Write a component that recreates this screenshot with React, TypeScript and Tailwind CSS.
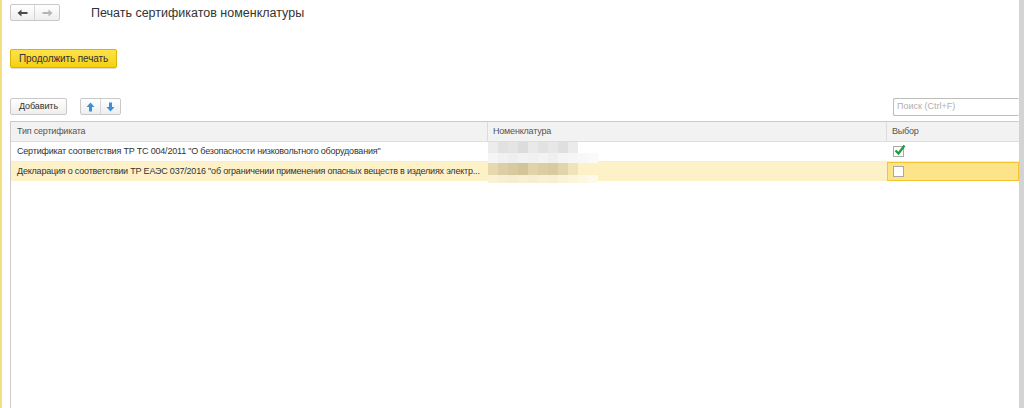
import React from "react";

const FONT = "font-['Liberation_Sans',Arial,sans-serif]";

// pixelated (blurred) name cells: [row of block colours]
const MOSAIC: { top: number; h: number; colors: string[] }[] = [
  { top: 0, h: 11, colors: ["#ececec", "#e1e1e1", "#e4e4e4", "#dcdcdc", "#e9e9e9", "#e2e2e2", "#e7e7e7", "#dfdfdf", "#ebebeb"] },
  { top: 11, h: 10, colors: ["#f5f5f3", "#f1f1ef", "#eeeeec", "#f2f2f0", "#f0f0ee", "#f3f3f1", "#efefed", "#f4f4f2", "#f6f6f4", "#f8f8f6", "#fafaf8"] },
  { top: 21, h: 12, colors: ["#e6d9b0", "#dccfa5", "#d8ca9e", "#d4c598", "#e0d3a8", "#dccea2", "#d9cb9f", "#e2d5ab", "#efe3bc"] },
  { top: 33, h: 8, colors: ["#fbf2d6", "#f8efd2", "#f6edd0", "#f9f0d4", "#f7eed2", "#faf1d5", "#f8efd3", "#fbf3d8", "#fcf5dc", "#fdf7e2", "#fef9e8"] },
];

function NavButtons() {
  return (
    <div className="flex h-[17px] rounded-[2px] border border-[#c9c9c9] bg-gradient-to-b from-white to-[#eeeeee]">
      <div className="flex w-[24px] items-center justify-center border-r border-[#d6d6d6]">
        <svg width="11" height="8" viewBox="0 0 11 8">
          <path d="M0.5 4 L4.5 0.5 L4.5 3 L10.5 3 L10.5 5 L4.5 5 L4.5 7.5 Z" fill="#4a4a4a" />
        </svg>
      </div>
      <div className="flex w-[24px] items-center justify-center">
        <svg width="11" height="8" viewBox="0 0 11 8">
          <path d="M10.5 4 L6.5 0.5 L6.5 3 L0.5 3 L0.5 5 L6.5 5 L6.5 7.5 Z" fill="#b5b5b5" />
        </svg>
      </div>
    </div>
  );
}

function Arrow({ up }: { up?: boolean }) {
  return (
    <svg width="9" height="10" viewBox="0 0 9 10">
      {up ? (
        <path d="M4.5 0.5 L8.5 5 L6 5 L6 9.5 L3 9.5 L3 5 L0.5 5 Z" fill="#3d8fd8" />
      ) : (
        <path d="M4.5 9.5 L8.5 5 L6 5 L6 0.5 L3 0.5 L3 5 L0.5 5 Z" fill="#3d8fd8" />
      )}
    </svg>
  );
}

function Checkbox({ checked }: { checked?: boolean }) {
  return (
    <div className="relative h-[11px] w-[11px] border border-[#a9a9a9] bg-white">
      {checked && (
        <svg className="absolute -top-[3px] left-[0px]" width="12" height="12" viewBox="0 0 12 12">
          <path d="M1.5 6.5 L4.5 9.5 L10.5 1.5" stroke="#1e9a3e" strokeWidth="2.2" fill="none" />
        </svg>
      )}
    </div>
  );
}

export default function App() {
  return (
    <div className={`flex h-[408px] w-[1024px] overflow-hidden bg-white text-[#333] ${FONT}`}>
      <div className="w-[2px] shrink-0 bg-[#f3de82]" />
      <div className="flex min-w-0 flex-1 flex-col pl-[8px]">
        {/* header */}
        <div className="mt-[4px] flex h-[17px] items-center">
          <NavButtons />
          <div className="ml-[31px] mt-[1px] text-[12.5px] leading-none text-[#333]">Печать сертификатов номенклатуры</div>
        </div>

        {/* command bar */}
        <div className="mt-[28px] flex">
          <button className="h-[19px] w-[107px] rounded-[2px] border border-[#d7b500] bg-gradient-to-b from-[#fde24a] to-[#f5d000] text-[10px] tracking-[-0.1px] text-[#333] shadow-[0_1px_1px_rgba(0,0,0,0.15)]">
            Продолжить печать
          </button>
        </div>

        {/* table toolbar */}
        <div className="mt-[30px] flex h-[17px] items-center">
          <button className="h-[17px] w-[57px] rounded-[2px] border border-[#c9c9c9] bg-gradient-to-b from-white to-[#eeeeee] text-[9px] tracking-[-0.1px] text-[#333]">
            Добавить
          </button>
          <div className="ml-[13px] flex h-[17px] rounded-[2px] border border-[#c9c9c9] bg-gradient-to-b from-white to-[#eeeeee]">
            <div className="flex w-[20px] items-center justify-center border-r border-[#d6d6d6]">
              <Arrow up />
            </div>
            <div className="flex w-[19px] items-center justify-center">
              <Arrow />
            </div>
          </div>
          <div className="ml-auto flex h-[18px] w-[126px] items-center rounded-[2px] border border-r-0 border-[#bcbcbc] pl-[3px] text-[9px] text-[#b0b0b0]">
            Поиск (Ctrl+F)
          </div>
        </div>

        {/* table */}
        <div className="mt-[6px] flex flex-1 flex-col border-l border-t border-[#cbcbcb] text-[9px] tracking-[-0.2px]">
          <div className="flex h-[20px] border-b border-[#dedede] bg-[#f2f2f2] text-[#555]">
            <div className="flex w-[477px] items-center border-r border-[#dcdcdc] pl-[6px]">Тип сертификата</div>
            <div className="flex w-[399px] items-center border-r border-[#dcdcdc] pl-[5px]">Номенклатура</div>
            <div className="flex flex-1 items-center pl-[5px]">Выбор</div>
          </div>
          <div className="relative">
            <div className="flex h-[20px] border-b border-[#ececec]">
              <div className="flex w-[477px] items-center pl-[6px]">
                Сертификат соответствия ТР ТС 004/2011 "О безопасности низковольтного оборудования"
              </div>
              <div className="w-[399px]" />
              <div className="flex flex-1 items-center pl-[6px]">
                <Checkbox checked />
              </div>
            </div>
            <div className="flex h-[19px]">
              <div className="flex w-[477px] items-center overflow-hidden whitespace-nowrap bg-[#fdf1c8] pl-[6px]">
                Декларация о соответствии ТР ЕАЭС 037/2016 "об ограничении применения опасных веществ в изделиях электр...
              </div>
              <div className="w-[399px] bg-[#fdf1c8]" />
              <div className="flex flex-1 items-center border border-[#f2c531] bg-[#fde38a] pl-[5px]">
                <Checkbox />
              </div>
            </div>
            {/* blurred nomenclature names */}
            <div className="pointer-events-none absolute left-[477px] top-[0px]">
              {MOSAIC.map((row, i) => (
                <div key={i} className="absolute left-0 flex" style={{ top: row.top, height: row.h }}>
                  {row.colors.map((c, j) => (
                    <div key={j} className="h-full w-[10px]" style={{ backgroundColor: c }} />
                  ))}
                </div>
              ))}
            </div>
          </div>
        </div>
      </div>
      <div className="w-[5px] shrink-0 bg-[#d3d3d3]" />
    </div>
  );
}
